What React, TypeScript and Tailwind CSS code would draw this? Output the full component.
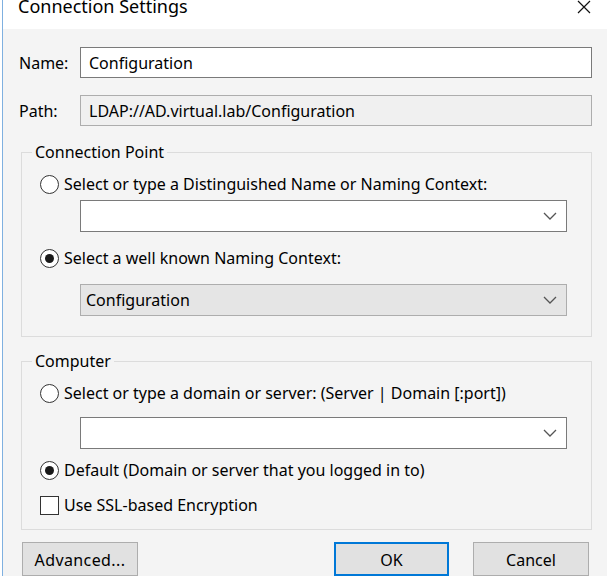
import React from "react";

const font = { fontFamily: '"Noto Sans", "Open Sans", sans-serif' };

function Chevron() {
  return (
    <svg width="14" height="8" viewBox="0 0 14 8" className="shrink-0">
      <polyline points="1,1 7,7 13,1" fill="none" stroke="#555" strokeWidth="1.3" />
    </svg>
  );
}

function Radio({ checked }: { checked?: boolean }) {
  return (
    <div className="w-[19px] h-[19px] rounded-full border border-[#333] bg-white flex items-center justify-center shrink-0">
      {checked && <div className="w-[9px] h-[9px] rounded-full bg-[#1a1a1a]" />}
    </div>
  );
}

function Combo({ gray, value }: { gray?: boolean; value?: string }) {
  return (
    <div
      className={
        "ml-[40px] w-[487px] h-[32px] flex items-center justify-between pl-[5px] pr-[9px] border " +
        (gray ? "bg-[#e5e5e5] border-[#adadad]" : "bg-white border-[#7a7a7a]")
      }
    >
      <span>{value}</span>
      <Chevron />
    </div>
  );
}

export default function App() {
  return (
    <div
      className="w-[607px] h-[576px] overflow-hidden bg-white pl-[2px] text-[16px] text-black"
      style={font}
    >
      <div className="h-full border-l border-[#7fb0e0] flex flex-col">
        <div className="h-[30px] bg-white flex items-start justify-between pl-[15px] pr-[16px]">
          <span className="text-[18px] leading-none mt-[-3px]">Connection Settings</span>
          <svg width="14" height="14" viewBox="0 0 14 14" className="mt-[0px]">
            <path d="M1 1 L13 13 M13 1 L1 13" stroke="#111" strokeWidth="1.2" />
          </svg>
        </div>
        <div className="flex-1 bg-[#f4f4f4] pt-[18px] pl-[16px] pr-[15px] flex flex-col">
          <div className="flex items-center h-[31px]">
            <span className="w-[61px]">Name:</span>
            <div className="flex-1 h-[31px] border border-[#7a7a7a] bg-white flex items-center pl-[8px]">
              Configuration
            </div>
          </div>
          <div className="flex items-center h-[31px] mt-[17px]">
            <span className="w-[61px]">Path:</span>
            <div className="flex-1 h-[31px] border border-[#adadad] bg-[#f0f0f0] flex items-center pl-[8px]">
              LDAP://AD.virtual.lab/Configuration
            </div>
          </div>

          <div className="relative mt-[26px] ml-[2px] h-[185px] border border-[#dcdcdc] pt-[21px] pl-[18px]">
            <span className="absolute left-[10px] top-[-13px] px-[3px] bg-[#f4f4f4]">Connection Point</span>
            <div className="flex items-center gap-[5px] h-[20px]">
              <Radio />
              <span>Select or type a Distinguished Name or Naming Context:</span>
            </div>
            <div className="mt-[6px]">
              <Combo />
            </div>
            <div className="flex items-center gap-[5px] h-[20px] mt-[16px]">
              <Radio checked />
              <span>Select a well known Naming Context:</span>
            </div>
            <div className="mt-[16px]">
              <Combo gray value="Configuration" />
            </div>
          </div>

          <div className="relative mt-[24px] ml-[2px] h-[169px] border border-[#dcdcdc] pt-[21px] pl-[18px]">
            <span className="absolute left-[10px] top-[-13px] px-[3px] bg-[#f4f4f4]">Computer</span>
            <div className="flex items-center gap-[5px] h-[20px]">
              <Radio />
              <span>Select or type a domain or server: (Server | Domain [:port])</span>
            </div>
            <div className="mt-[14px]">
              <Combo />
            </div>
            <div className="flex items-center gap-[5px] h-[20px] mt-[11px]">
              <Radio checked />
              <span>Default (Domain or server that you logged in to)</span>
            </div>
            <div className="flex items-center gap-[5px] h-[20px] mt-[15px]">
              <div className="w-[19px] h-[19px] border border-[#333] bg-white shrink-0" />
              <span>Use SSL-based Encryption</span>
            </div>
          </div>

          <div className="flex mt-[12px] ml-[3px]">
            <div className="w-[116px] h-[34px] bg-[#e1e1e1] border border-[#adadad] flex items-center justify-center pt-[2px] tracking-[0.4px]">
              Advanced...
            </div>
            <div className="w-[115px] h-[34px] ml-auto bg-[#e1e1e1] border-2 border-[#0078d7] flex items-center justify-center pt-[2px]">
              OK
            </div>
            <div className="w-[116px] h-[34px] ml-[24px] mr-[3px] bg-[#e1e1e1] border border-[#adadad] flex items-center justify-center pt-[2px]">
              Cancel
            </div>
          </div>
        </div>
      </div>
    </div>
  );
}
